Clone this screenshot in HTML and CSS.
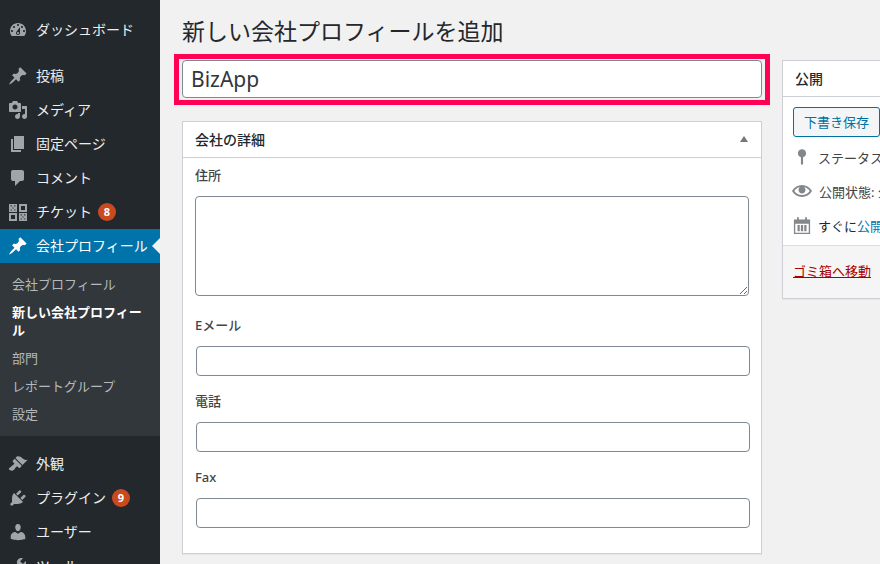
FILE: index.html
```html
<!DOCTYPE html>
<html lang="ja">
<head>
<meta charset="utf-8">
<title>新しい会社プロフィールを追加</title>
<link rel="stylesheet" href="styles.css">
</head>
<body>
<div class="app">
  <nav class="sidebar">
    <a class="item first"><svg class="ic" viewBox="0 0 20 20"><path d="M3.76 16h12.48c1.1-1.37 1.76-3.11 1.76-5 0-4.42-3.58-8-8-8s-8 3.58-8 8c0 1.89.66 3.63 1.76 5zM10 4c.55 0 1 .45 1 1s-.45 1-1 1-1-.45-1-1 .45-1 1-1zM6 6c.55 0 1 .45 1 1s-.45 1-1 1-1-.45-1-1 .45-1 1-1zm8 0c.55 0 1 .45 1 1s-.45 1-1 1-1-.45-1-1 .45-1 1-1zm-5.37 5.55L12 7v6c0 1.1-.9 2-2 2s-2-.9-2-2c0-.57.24-1.08.63-1.45zM4 10c.55 0 1 .45 1 1s-.45 1-1 1-1-.45-1-1 .45-1 1-1zm12 0c.55 0 1 .45 1 1s-.45 1-1 1-1-.45-1-1 .45-1 1-1zm-5 3c0-.55-.45-1-1-1s-1 .45-1 1 .45 1 1 1 1-.45 1-1z"/></svg>ダッシュボード</a>
    <a class="item sep"><svg class="ic" viewBox="0 0 20 20"><path d="M10.44 3.02l1.82-1.82 6.36 6.35-1.83 1.82c-1.05-.68-2.48-.57-3.41.36l-.75.75c-.92.93-1.04 2.35-.35 3.41l-1.83 1.82-2.41-2.41-2.8 2.79c-.42.42-3.38 2.71-3.8 2.29s1.86-3.39 2.28-3.81l2.79-2.79L4.1 9.36l1.83-1.82c1.05.69 2.48.57 3.4-.36l.75-.75c.93-.92 1.05-2.35.36-3.41z"/></svg>投稿</a>
    <a class="item"><svg class="ic" viewBox="0 0 20 20"><path d="M13 11V4c0-.55-.45-1-1-1h-1.67L9 1H5L3.67 3H2c-.55 0-1 .45-1 1v7c0 .55.45 1 1 1h10c.55 0 1-.45 1-1zM7 4.5c1.38 0 2.5 1.12 2.5 2.5S8.38 9.5 7 9.5 4.5 8.38 4.5 7 5.62 4.5 7 4.5zM14 6h5v10.5c0 1.38-1.12 2.5-2.5 2.5S14 17.88 14 16.5s1.12-2.5 2.5-2.5c.17 0 .34.02.5.05V9h-3V6zm-4 8.05V13h2v3.5c0 1.38-1.12 2.5-2.5 2.5S7 17.88 7 16.5 8.12 14 9.5 14c.17 0 .34.02.5.05z"/></svg>メディア</a>
    <a class="item"><svg class="ic" viewBox="0 0 20 20"><path d="M6 15V2h10v13H6zm-1 1h8v2H3V5h2v11z"/></svg>固定ページ</a>
    <a class="item"><svg class="ic" viewBox="0 0 20 20"><path d="M5 2h9c1.1 0 2 .9 2 2v7c0 1.1-.9 2-2 2h-2l-5 5v-5H5c-1.1 0-2-.9-2-2V4c0-1.1.9-2 2-2z"/></svg>コメント</a>
    <a class="item"><svg class="ic" viewBox="0 0 20 20"><path fill-rule="evenodd" d="M1 2h8v8H1zM2.600 3.200h1.200v1.200H2.600zM6.200 3.200h1.200v1.200H6.200zM4.400 5.400h1.200v1.200H4.400zM2.600 7.400h1.200v1.200H2.600zM6.200 7.400h1.200v1.200H6.200zM11 2h8v8h-8zM13 4v4h4V4zM1 11h8v8H1zM3 13v4h4v-4zM11 11h8v8h-8zM12.600 12.200h1.200v1.200h-1.200zM16.200 12.200h1.200v1.200h-1.200zM14.400 14.400h1.200v1.200h-1.200zM12.600 16.400h1.200v1.200h-1.200zM16.200 16.400h1.200v1.200h-1.200z"/></svg>チケット<span class="badge">8</span></a>
    <a class="item active"><svg class="ic" viewBox="0 0 20 20"><path d="M10.44 3.02l1.82-1.82 6.36 6.35-1.83 1.82c-1.05-.68-2.48-.57-3.41.36l-.75.75c-.92.93-1.04 2.35-.35 3.41l-1.83 1.82-2.41-2.41-2.8 2.79c-.42.42-3.38 2.71-3.8 2.29s1.86-3.39 2.28-3.81l2.79-2.79L4.1 9.36l1.83-1.82c1.05.69 2.48.57 3.4-.36l.75-.75c.93-.92 1.05-2.35.36-3.41z"/></svg>会社プロフィール<span class="notch"></span></a>
    <div class="submenu">
      <a class="sub">会社プロフィール</a>
      <a class="sub current">新しい会社プロフィール</a>
      <a class="sub">部門</a>
      <a class="sub">レポートグループ</a>
      <a class="sub">設定</a>
    </div>
    <a class="item sep2"><svg class="ic" viewBox="0 0 20 20"><path d="M14.48 11.06L7.41 3.99l1.5-1.5c.5-.56 2.3-.47 3.51.32 1.21.8 1.43 1.28 2.91 2.1 1.18.64 2.45 1.26 4.45.85zm-.71.71L6.7 4.7 4.93 6.47c-.39.39-.39 1.02 0 1.41l1.06 1.06c.39.39.39 1.03 0 1.42-.6.6-1.43 1.11-2.21 1.69-.35.26-.7.53-1.01.84C1.43 13.23.4 14.85 1.02 15.5c.54.61 3.11 2.06 4.75.42.31-.31.58-.66.84-1.01.58-.78 1.09-1.61 1.69-2.21.39-.39 1.02-.39 1.41 0l1.06 1.06c.39.39 1.02.39 1.41 0z"/></svg>外観</a>
    <a class="item"><svg class="ic" viewBox="0 0 20 20"><path d="M13.11 4.36L9.87 7.6 8 5.73l3.24-3.24c.35-.34 1.05-.2 1.56.32.52.51.66 1.21.31 1.55zm-8 1.77l.91-1.12 9.01 9.01-1.19.84c-.71.71-2.63 1.16-3.82 1.16H6.14L4.9 17.26c-.59.59-1.54.59-2.12 0-.59-.58-.59-1.53 0-2.12l1.24-1.24v-3.88c0-1.13.4-3.19 1.09-3.89zm7.26 3.97l3.24-3.24c.34-.35 1.04-.21 1.55.31.52.51.66 1.21.31 1.55l-3.24 3.25z"/></svg>プラグイン<span class="badge">9</span></a>
    <a class="item"><svg class="ic" viewBox="0 0 20 20"><path d="M10 9.25c-2.27 0-2.73-3.44-2.73-3.44C7 4.02 7.82 2 9.97 2c2.16 0 2.98 2.02 2.71 3.81 0 0-.41 3.44-2.68 3.44zm0 2.57L12.72 10c2.39 0 4.52 2.33 4.52 4.53v2.49s-3.65 1.13-7.24 1.13c-3.65 0-7.24-1.13-7.24-1.13v-2.49c0-2.25 1.94-4.48 4.47-4.48z"/></svg>ユーザー</a>
    <a class="item"><svg class="ic" viewBox="0 0 20 20"><path d="M16.68 9.77c-1.34 1.34-3.3 1.67-4.95.99l-5.41 6.52c-.99.99-2.59.99-3.58 0s-.99-2.59 0-3.57l6.52-5.42c-.68-1.65-.35-3.61.99-4.95 1.28-1.28 3.12-1.62 4.72-1.06l-2.89 2.89 2.82 2.82 2.86-2.87c.53 1.58.18 3.39-1.08 4.65zM3.81 16.21c.4.39 1.04.39 1.43 0 .4-.4.4-1.04 0-1.43-.39-.4-1.03-.4-1.43 0-.39.39-.39 1.03 0 1.43z"/></svg>ツール</a>
  </nav>
  <main class="main">
    <h1 class="title">新しい会社プロフィールを追加</h1>
    <div class="columns">
      <div class="left">
        <div class="title-wrap">
          <input class="title-input" type="text" value="BizApp">
          <span class="highlight"></span>
        </div>
        <section class="box details">
          <header class="box-head"><h2>会社の詳細</h2><span class="tri"></span></header>
          <div class="box-body">
            <label class="lbl lbl-first">住所</label>
            <textarea class="area"></textarea>
            <label class="lbl lbl-mail">Eメール</label>
            <input class="field" type="text">
            <label class="lbl">電話</label>
            <input class="field" type="text">
            <label class="lbl">Fax</label>
            <input class="field" type="text">
          </div>
        </section>
      </div>
      <aside class="right">
        <section class="box publish">
          <header class="box-head"><h2>公開</h2></header>
          <div class="pub-body">
            <button class="draft" type="button">下書き保存</button>
            <div class="row row-status"><svg class="pi pin" viewBox="0 0 20 20"><path d="M10 1.500a4.500 4.500 0 0 1 1.200 8.840V17.500a1.200 1.200 0 0 1-2.400 0V10.340A4.500 4.500 0 0 1 10 1.500z"/></svg><span>ステータス: 下書き</span></div>
            <div class="row row-vis"><svg class="pi eye" viewBox="0 0 20 20"><path d="M19.700 9.400C17.700 6 14 3.900 10 3.900S2.300 6 .3 9.400L0 10l.3.6c2 3.400 5.700 5.500 9.700 5.500s7.700-2.100 9.700-5.500l.3-.6-.3-.6zM10 14.100c-3.100 0-6-1.600-7.700-4.100C3.600 8 5.700 6.600 8 6.100c-.9.6-1.500 1.700-1.500 2.900 0 1.900 1.600 3.500 3.500 3.500s3.500-1.600 3.500-3.500c0-1.200-.6-2.300-1.500-2.900 2.300.5 4.400 1.900 5.700 3.900-1.700 2.500-4.600 4.100-7.700 4.100z"/></svg><span>公開状態: 公開</span></div>
            <div class="row row-cal"><svg class="pi cal" viewBox="0 0 20 20"><path fill-rule="evenodd" d="M1 4h3.500V1.500h2V4h7V1.500h2V4H19v16H1zM2.500 8.500V18.500h15V8.500z"/><path d="M5 10h2.500v7H5zM8.750 10h2.500v7h-2.500zM12.500 10H15v7h-2.500z"/></svg><span class="cal-text">すぐに<span class="lnk">公開する</span></span></div>
          </div>
          <footer class="pub-foot"><a class="trash">ゴミ箱へ移動</a></footer>
        </section>
      </aside>
    </div>
  </main>
</div>
</body>
</html>
```
FILE: styles.css
```css
* { box-sizing: border-box; }
html, body { margin: 0; padding: 0; height: 564px; overflow: hidden; }
body {
  background: #f1f1f1;
  color: #444;
  font-family: "Noto Sans", "Noto Sans CJK JP", sans-serif;
  font-size: 13px;
}
.app { display: flex; height: 564px; overflow: hidden; }

/* Sidebar */
.sidebar { width: 160px; flex: none; background: #23282d; padding-top: 13px; height: 564px; overflow: hidden; }
.item {
  display: flex; align-items: center; position: relative;
  height: 34px; padding-left: 8px;
  color: #eee; font-size: 14px; line-height: 18px; white-space: nowrap;
}
.ic { width: 20px; height: 20px; flex: none; margin-right: 8px; fill: #a0a5aa; }
.sep { margin-top: 12px; }
.sep2 { margin-top: 11px; }
.active { background: #0073aa; color: #fff; }
.active .ic { fill: #fff; }
.notch {
  position: absolute; right: 0; top: 9px;
  border: 8px solid transparent; border-right-color: #f1f1f1; border-left-width: 0;
}
.badge {
  width: 18px; height: 18px; margin-left: 6px; border-radius: 50%;
  background: #ca4a1f; color: #fff; font-size: 11px; font-weight: 700;
  display: flex; align-items: center; justify-content: center;
}
.submenu { background: #32373c; padding: 7px 0 8px; }
.sub { display: block; padding: 5px 12px; font-size: 13px; line-height: 18px; color: #b4b9be; }
.current { color: #fff; font-weight: 700; }

/* Main */
.main { flex: 1; min-width: 0; padding-left: 22px; overflow: hidden; }
.title { margin: 0; padding-top: 14px; height: 60px; font-size: 23px; line-height: 34px; font-weight: 400; color: #23282d; white-space: nowrap; }
.columns { display: flex; gap: 20px; width: 720px; }
.left { width: 580px; flex: none; }
.right { width: 280px; flex: none; }

.title-wrap { position: relative; height: 38px; margin-bottom: 23px; }
.title-input {
  display: block; width: 100%; height: 38px; padding: 0 8px; margin: 0;
  border: 1px solid #7e8993; border-radius: 4px; background: #fff; outline: none;
  font-family: "Noto Sans", sans-serif; font-size: 21px; line-height: 36px; color: #32373c;
}
.highlight { position: absolute; left: -8px; top: -6px; width: 596px; height: 51px; border: 5px solid #ff0055; pointer-events: none; }

.box { background: #fff; border: 1px solid #ccd0d4; box-shadow: 0 1px 1px rgba(0,0,0,.04); }
.box-head { height: 36px; border-bottom: 1px solid #ccd0d4; padding: 0 12px; display: flex; align-items: center; justify-content: space-between; }
.box-head h2 { margin: 0; font-size: 14px; line-height: 18px; font-weight: 500; color: #23282d; }
.tri { width: 0; height: 0; border: 4.5px solid transparent; border-top-width: 0; border-bottom: 6px solid #72777c; margin: 0 1px 2px 0; }

.details { height: 433px; }
.box-body { padding: 8px 12px 0; }
.lbl { display: block; height: 18px; font-size: 13px; line-height: 18px; font-weight: 500; color: #444; margin-bottom: 12px; margin-top: 16px; }
.lbl-first { margin-top: 0; }
.lbl-mail { margin-top: 20px; }
.area, .field { display: block; background: #fff; border: 1px solid #7e8993; border-radius: 4px; margin: 0; outline: none; }
.area { width: 554px; height: 100px; resize: vertical; }
.field { width: 554px; height: 30px; margin-left: 1px; }

.publish { height: 239px; display: flex; flex-direction: column; }
.pub-body { padding: 10px; flex: none; height: 148px; }
.draft {
  display: block; width: 87px; height: 30px; padding: 0; margin: 0;
  background: #f3f5f6; border: 1px solid #0071a1; border-radius: 3px; color: #0071a1;
  font-family: inherit; font-size: 13px; line-height: 28px;
}
.row { display: flex; align-items: center; height: 34px; font-size: 13px; white-space: nowrap; color: #444; }
.row-status { margin-top: 3px; }
.pi { fill: #82878c; flex: none; }
.pin { width: 18px; height: 18px; margin-right: 7px; }
.eye { width: 20px; height: 20px; margin-left: -1px; margin-right: 7px; }
.cal { width: 18px; height: 18px; margin-right: 7px; }
.lnk { color: #0073aa; }
.cal-text { color: #23282d; }
.pub-foot { flex: 1; background: #f5f5f5; border-top: 1px solid #ddd; padding: 15px 10px; font-size: 13px; line-height: 20px; }
.trash { color: #a00; text-decoration: underline; }
```
